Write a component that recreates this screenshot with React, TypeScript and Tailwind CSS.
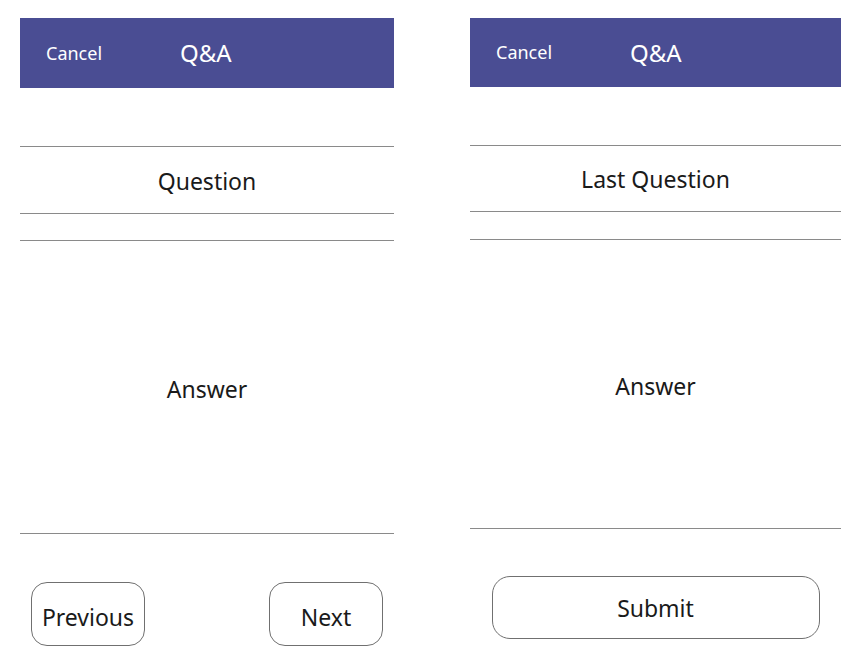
import React from 'react';

const font = { fontFamily: '"Segoe UI", "Noto Sans", "Open Sans", sans-serif' };

// Both screens share the same skeleton; sizes differ by a pixel or two in the mockup.
type Dims = {
  width: string;
  header: string;
  spacer: string;
  question: string;
  gap: string;
  answer: string;
};

function Header({ h }: { h: string }) {
  return (
    <div className={`flex items-center bg-[#4a4d93] text-white ${h}`}>
      <span className="ml-[26px] w-[134px] text-[18px]">Cancel</span>
      <span className="text-[24px]">Q&amp;A</span>
    </div>
  );
}

function Screen({ question, d, footer }: { question: string; d: Dims; footer: React.ReactNode }) {
  return (
    <div className={`flex flex-col ${d.width}`}>
      <Header h={d.header} />
      <div className={d.spacer} />
      <div className={`flex items-center justify-center border-y border-[#8a8a8a] pt-[2px] text-[23px] text-[#1a1a1a] ${d.question}`}>
        {question}
      </div>
      <div className={d.gap} />
      <div className={`flex items-center justify-center border-y border-[#8a8a8a] pt-[4px] text-[23px] text-[#1a1a1a] ${d.answer}`}>
        Answer
      </div>
      {footer}
    </div>
  );
}

export default function App() {
  return (
    <div className="flex h-[654px] w-[864px] gap-[76px] bg-white pl-[20px] pt-[18px]" style={font}>
      <Screen
        question="Question"
        d={{
          width: 'w-[374px]',
          header: 'h-[70px]',
          spacer: 'h-[58px]',
          question: 'h-[68px]',
          gap: 'h-[26px]',
          answer: 'h-[294px]',
        }}
        footer={
          <div className="mt-[48px] flex justify-between px-[11px]">
            <button className="h-[64px] w-[114px] rounded-[16px] border border-[#707070] pt-[6px] text-[23px] text-[#1a1a1a]">
              Previous
            </button>
            <button className="h-[64px] w-[114px] rounded-[16px] border border-[#707070] pt-[6px] text-[23px] text-[#1a1a1a]">
              Next
            </button>
          </div>
        }
      />
      <Screen
        question="Last Question"
        d={{
          width: 'w-[371px]',
          header: 'h-[69px]',
          spacer: 'h-[58px]',
          question: 'h-[67px]',
          gap: 'h-[27px]',
          answer: 'h-[290px]',
        }}
        footer={
          <div className="mt-[47px] flex justify-center">
            <button className="h-[63px] w-[328px] rounded-[18px] border border-[#707070] pt-[2px] text-[23px] text-[#1a1a1a]">
              Submit
            </button>
          </div>
        }
      />
    </div>
  );
}
